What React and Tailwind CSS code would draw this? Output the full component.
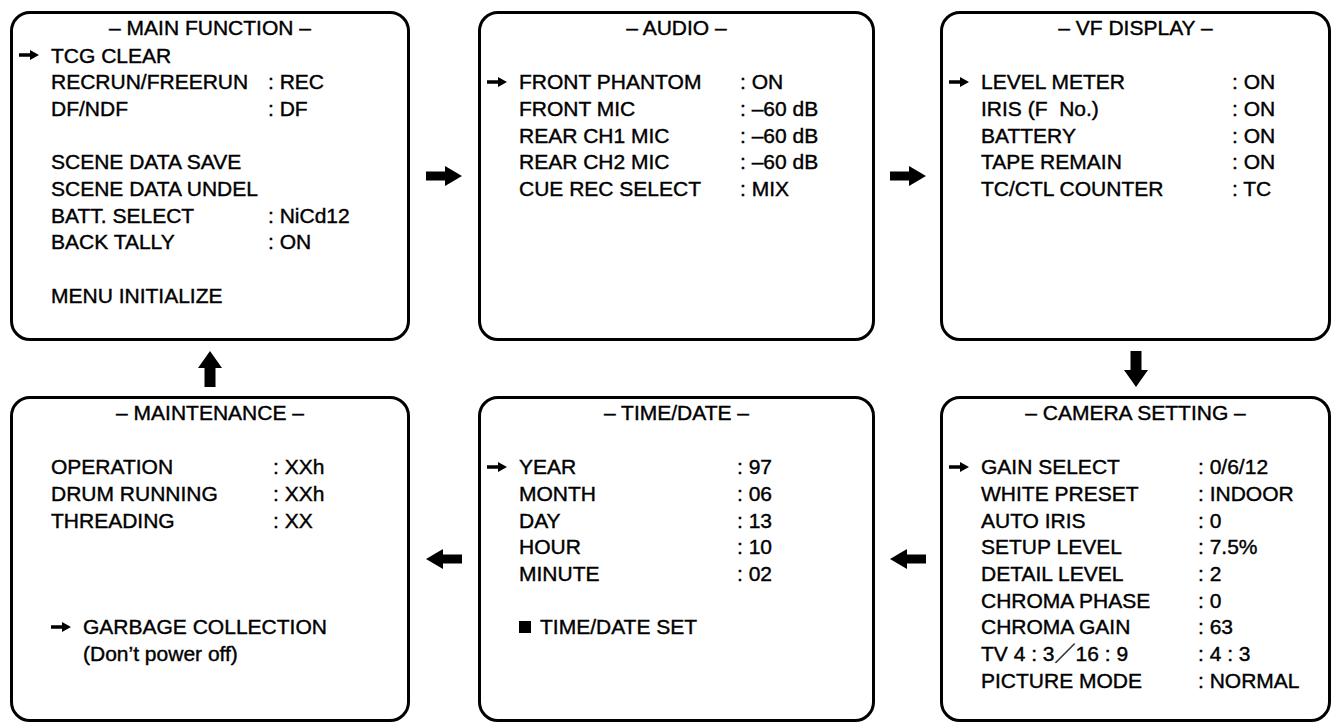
import React from 'react';

const Pointer = () => (
  <svg width="20" height="10" viewBox="0 0 20 10" className="shrink-0">
    <path d="M0 3.2h11V0l9 5-9 5V6.8H0z" fill="black" />
  </svg>
);

const BigRight = () => (
  <svg width="36" height="20" viewBox="0 0 36 20">
    <path d="M0 5.5h19V0l17 10-17 10v-5.5H0z" fill="black" />
  </svg>
);

const BigLeft = () => (
  <svg width="36" height="20" viewBox="0 0 36 20">
    <path d="M36 5.5H17V0L0 10l17 10v-5.5h19z" fill="black" />
  </svg>
);

const BigDown = () => (
  <svg width="24" height="36" viewBox="0 0 24 36">
    <path d="M6.5 0h11v19h6.5L12 36 0 19h6.5z" fill="black" />
  </svg>
);

const BigUp = () => (
  <svg width="24" height="36" viewBox="0 0 24 36">
    <path d="M12 0l12 17h-6.5v19h-11V17H0z" fill="black" />
  </svg>
);

const Blank = () => <div className="h-[26.7px]" />;

// one menu row: pointer slot, label column, value
const Row = ({ on, label, value, lw }) => (
  <div className="flex h-[26.7px] items-center whitespace-pre">
    <div className="flex w-[38px] shrink-0 items-center pl-[6px]">{on && <Pointer />}</div>
    <div style={{ width: lw }} className="shrink-0">{label}</div>
    {value != null && <div>: {value}</div>}
  </div>
);

const Box = ({ title, children }) => (
  <div className="flex h-full flex-col rounded-[20px] border-[3px] border-black">
    <div className="h-[28px] text-center leading-[28px]">– {title} –</div>
    {children}
  </div>
);

export default function App() {
  return (
    <div className="grid h-[725px] w-[1333px] grid-cols-[400px_68px_397px_65px_391px] grid-rows-[330px_55px_326px] bg-white pl-[10px] pt-[11px] font-['Liberation_Sans','Noto_Sans_CJK_JP',sans-serif] text-[21px] text-black [-webkit-text-stroke:0.4px_black]">
      {/* top row */}
      <Box title="MAIN FUNCTION">
        <Row on label="TCG CLEAR" lw={217} />
        <Row label="RECRUN/FREERUN" value="REC" lw={217} />
        <Row label="DF/NDF" value="DF" lw={217} />
        <Blank />
        <Row label="SCENE DATA SAVE" lw={217} />
        <Row label="SCENE DATA UNDEL" lw={217} />
        <Row label="BATT. SELECT" value="NiCd12" lw={217} />
        <Row label="BACK TALLY" value="ON" lw={217} />
        <Blank />
        <Row label="MENU INITIALIZE" lw={217} />
      </Box>
      <div className="flex items-center justify-center">
        <BigRight />
      </div>
      <Box title="AUDIO">
        <Blank />
        <Row on label="FRONT PHANTOM" value="ON" lw={221} />
        <Row label="FRONT MIC" value="–60 dB" lw={221} />
        <Row label="REAR CH1 MIC" value="–60 dB" lw={221} />
        <Row label="REAR CH2 MIC" value="–60 dB" lw={221} />
        <Row label="CUE REC SELECT" value="MIX" lw={221} />
      </Box>
      <div className="flex items-center justify-center">
        <BigRight />
      </div>
      <Box title="VF DISPLAY">
        <Blank />
        <Row on label="LEVEL METER" value="ON" lw={251} />
        <Row label="IRIS (F  No.)" value="ON" lw={251} />
        <Row label="BATTERY" value="ON" lw={251} />
        <Row label="TAPE REMAIN" value="ON" lw={251} />
        <Row label="TC/CTL COUNTER" value="TC" lw={251} />
      </Box>

      {/* links between rows */}
      <div className="flex items-center justify-center">
        <BigUp />
      </div>
      <div />
      <div />
      <div />
      <div className="flex items-center justify-center">
        <BigDown />
      </div>

      {/* bottom row */}
      <Box title="MAINTENANCE">
        <Blank />
        <Row label="OPERATION" value="XXh" lw={222} />
        <Row label="DRUM RUNNING" value="XXh" lw={222} />
        <Row label="THREADING" value="XX" lw={222} />
        <Blank />
        <Blank />
        <Blank />
        <div className="flex h-[26.7px] items-center pl-[38px]">
          <Pointer />
          <span className="ml-[12px]">GARBAGE COLLECTION</span>
        </div>
        <div className="h-[26.7px] pl-[70px] leading-[26.7px]">(Don’t power off)</div>
      </Box>
      <div className="flex items-center justify-center">
        <BigLeft />
      </div>
      <Box title="TIME/DATE">
        <Blank />
        <Row on label="YEAR" value="97" lw={218} />
        <Row label="MONTH" value="06" lw={218} />
        <Row label="DAY" value="13" lw={218} />
        <Row label="HOUR" value="10" lw={218} />
        <Row label="MINUTE" value="02" lw={218} />
        <Blank />
        <div className="flex h-[26.7px] items-center pl-[38px]">
          <div className="h-[12px] w-[12px] bg-black" />
          <span className="ml-[9px]">TIME/DATE SET</span>
        </div>
      </Box>
      <div className="flex items-center justify-center">
        <BigLeft />
      </div>
      <Box title="CAMERA SETTING">
        <Blank />
        <Row on label="GAIN SELECT" value="0/6/12" lw={217} />
        <Row label="WHITE PRESET" value="INDOOR" lw={217} />
        <Row label="AUTO IRIS" value="0" lw={217} />
        <Row label="SETUP LEVEL" value="7.5%" lw={217} />
        <Row label="DETAIL LEVEL" value="2" lw={217} />
        <Row label="CHROMA PHASE" value="0" lw={217} />
        <Row label="CHROMA GAIN" value="63" lw={217} />
        <Row label="TV 4 : 3／16 : 9" value="4 : 3" lw={217} />
        <Row label="PICTURE MODE" value="NORMAL" lw={217} />
      </Box>
    </div>
  );
}
